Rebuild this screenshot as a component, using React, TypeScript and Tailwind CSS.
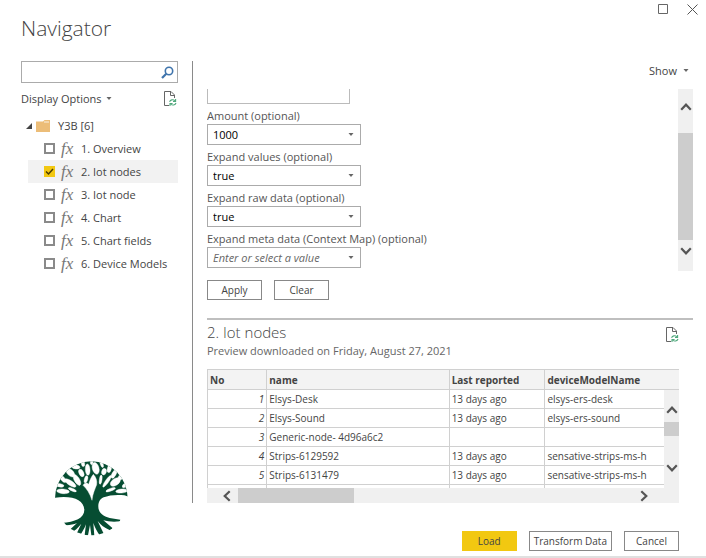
import type { ReactNode } from "react";

const treeItems = [
  "1. Overview",
  "2. Iot nodes",
  "3. Iot node",
  "4. Chart",
  "5. Chart fields",
  "6. Device Models",
];

const rows = [
  ["1", "Elsys-Desk", "13 days ago", "elsys-ers-desk"],
  ["2", "Elsys-Sound", "13 days ago", "elsys-ers-sound"],
  ["3", "Generic-node- 4d96a6c2", "", ""],
  ["4", "Strips-6129592", "13 days ago", "sensative-strips-ms-h"],
  ["5", "Strips-6131479", "13 days ago", "sensative-strips-ms-h"],
];

const params = [
  { id: "amount", label: "Amount (optional)", value: "1000" },
  { id: "values", label: "Expand values (optional)", value: "true" },
  { id: "raw", label: "Expand raw data (optional)", value: "true" },
  { id: "meta", label: "Expand meta data (Context Map) (optional)", value: "" },
];

function Caret() {
  return (
    <svg width="6" height="4" viewBox="0 0 6 4" className="shrink-0" aria-hidden="true">
      <path d="M.5 0h5L3 3z" fill="#666" />
    </svg>
  );
}

function Chevron({ turn }: { turn: string }) {
  return (
    <svg width="12" height="12" viewBox="0 0 12 12" className={`shrink-0 ${turn}`} aria-hidden="true">
      <path d="M1.2 8.7 6 3.7l4.8 5" fill="none" stroke="#555" strokeWidth="2.2" />
    </svg>
  );
}

function RefreshPage() {
  return (
    <svg width="14" height="16" viewBox="0 0 14 16" fill="none" aria-hidden="true">
      <path d="M6 14.5H1.500v-14H8L11.500 4v3M7.500.5v4h4" stroke="#666" />
      <path d="M6.600 10.800c.6-2 3.700-2.800 5.200-1M12.600 8v2.500H10M13 12c-.6 2.100-3.700 2.800-5.200 1M7 15v-2.500h2.600" stroke="#4fa87c" strokeWidth="1.100" />
    </svg>
  );
}

function TreeLogo() {
  return (
    <svg width="73" height="75" viewBox="28 35 219 225" className="block" role="img" aria-label="Tree">
      <defs>
        <clipPath id="round">
          <ellipse cx="137" cy="147" rx="109" ry="111" />
        </clipPath>
      </defs>
      <g clipPath="url(#round)" fill="#064d32">
        <path d="M24 146V30h226v112l-14-4c-20-3-46-1-62 6-13 6-16 16-16 28 0 18 14 28 34 34l32 5-1 5c-18 2-36 1-50-3l28 24-8 6c-17-8-28-16-37-28l20 42-10 6c-11-14-18-28-23-42l4 52h-8l-6-46-9 46h-9l6-48c-6 16-14 28-24 42l-8-6 18-38c-9 12-20 22-34 29l-7-5 28-26c-14 6-30 8-48 5l2-5c40-4 68-14 68-40-2-30-38-44-92-35z" />
        <g fill="#fff" stroke="#fff" strokeWidth="1.200">
          <path d="M112 108c5-8 12-9 17-3 3-11 7-22 14-30 8 8 12 20 10 31-5 13-12 27-14 47-6-20-16-35-27-45z" />
          <ellipse cx="52" cy="126" rx="19" ry="7" transform="rotate(5 52 126)" />
          <ellipse cx="80" cy="121" rx="13" ry="4" transform="rotate(24 80 121)" />
          <ellipse cx="43" cy="108" rx="12" ry="5" transform="rotate(10 43 108)" />
          <ellipse cx="74" cy="101" rx="20" ry="7" transform="rotate(34 74 101)" />
          <ellipse cx="51" cy="88" rx="14" ry="6" transform="rotate(50 51 88)" />
          <ellipse cx="94" cy="92" rx="18" ry="8" transform="rotate(60 94 92)" />
          <ellipse cx="74" cy="70" rx="16" ry="9" transform="rotate(44 74 70)" />
          <ellipse cx="91" cy="53" rx="12" ry="6" transform="rotate(8 91 53)" />
          <ellipse cx="107" cy="71" rx="12" ry="7" transform="rotate(65 107 71)" />
          <ellipse cx="121" cy="90" rx="11" ry="5" transform="rotate(105 121 90)" />
          <ellipse cx="126" cy="61" rx="17" ry="7" transform="rotate(86 126 61)" />
          <ellipse cx="112" cy="43" rx="9" ry="5" transform="rotate(80 112 43)" />
          <ellipse cx="138" cy="39" rx="7" ry="4" transform="rotate(95 138 39)" />
          <ellipse cx="150" cy="57" rx="18" ry="10" transform="rotate(75 150 57)" />
          <ellipse cx="168" cy="44" rx="11" ry="4" transform="rotate(70 168 44)" />
          <ellipse cx="175" cy="67" rx="10" ry="7" transform="rotate(105 175 67)" />
          <ellipse cx="165" cy="91" rx="14" ry="4" transform="rotate(98 165 91)" />
          <ellipse cx="191" cy="58" rx="12" ry="6" transform="rotate(104 191 58)" />
          <ellipse cx="184" cy="96" rx="21" ry="5" transform="rotate(125 184 96)" />
          <ellipse cx="205" cy="74" rx="14" ry="6" transform="rotate(118 205 74)" />
          <ellipse cx="209" cy="98" rx="17" ry="10" transform="rotate(145 209 98)" />
          <ellipse cx="228" cy="80" rx="14" ry="7" transform="rotate(130 228 80)" />
          <ellipse cx="195" cy="121" rx="15" ry="4" transform="rotate(160 195 121)" />
          <ellipse cx="228" cy="125" rx="18" ry="6" transform="rotate(-5 228 125)" />
          <ellipse cx="241" cy="106" rx="13" ry="6" transform="rotate(145 241 106)" />
        </g>
      </g>
    </svg>
  );
}

function ActionButton({ children, primary = false }: { children: ReactNode; primary?: boolean }) {
  return (
    <button
      type="button"
      className={`flex h-5 min-w-[55px] items-center justify-center border px-1 text-[10px] leading-4 whitespace-nowrap ${
        primary ? "border-[#f2c811] bg-[#f2c811]" : "border-[#888] bg-white"
      }`}
    >
      {children}
    </button>
  );
}

function Sidebar() {
  return (
    <aside className="flex w-48 shrink-0 flex-col pr-3.5 pl-5">
      <label className="ml-px flex h-[22px] items-center border border-[#ababab] pr-[3px]">
        <input type="text" aria-label="Search" className="h-full min-w-0 flex-1 px-1 outline-none" />
        <svg width="13" height="13" viewBox="0 0 13 13" fill="none" stroke="#3f74ac" aria-hidden="true">
          <circle cx="8" cy="5" r="3.700" strokeWidth="1.600" />
          <path d="M5.300 7.700 1 12" strokeWidth="2.200" />
        </svg>
      </label>
      <div className="flex h-8 items-center justify-between pr-px">
        <button type="button" className="ml-px flex items-center gap-1">
          Display Options <Caret />
        </button>
        <button type="button" aria-label="Refresh">
          <RefreshPage />
        </button>
      </div>
      <div className="flex h-[22px] items-center pl-1.5">
        <svg width="6" height="6" viewBox="0 0 6 6" aria-hidden="true">
          <path d="M6 0v6H0z" fill="#444" />
        </svg>
        <svg width="14" height="12" viewBox="0 0 14 12" className="ml-1" aria-hidden="true">
          <path d="M0 1.500h7L8.500 0H14v12H0z" fill="#ecbd78" />
          <path d="M8 2h5" stroke="#fff" strokeWidth=".8" />
        </svg>
        <span className="ml-2">Y3B [6]</span>
      </div>
      <ul>
        {treeItems.map((item, i) => (
          <li key={item} className={`ml-2 ${i === 1 ? "bg-[#f2f2f2]" : ""}`}>
            <label className="flex h-[23px] items-center pl-4">
              <span className="grid size-[11px] shrink-0 *:col-start-1 *:row-start-1">
                <input
                  type="checkbox"
                  defaultChecked={i === 1}
                  className="peer size-[11px] appearance-none border-2 border-[#8a8a8a] bg-white checked:border-[#f2c811] checked:bg-[#f2c811]"
                />
                <svg viewBox="0 0 11 11" className="pointer-events-none hidden size-[11px] peer-checked:block" aria-hidden="true">
                  <path d="m2 5.500 2.500 2.500L9 3" fill="none" stroke="#4a3c00" strokeWidth="1.500" />
                </svg>
              </span>
              <i className="ml-1.5 w-5 font-['Liberation_Serif',serif] text-[17px] leading-5 text-[#777]">fx</i>
              <span className="whitespace-nowrap">{item}</span>
            </label>
          </li>
        ))}
      </ul>
      <div className="mt-auto mb-5 pl-[35px]">
        <TreeLogo />
      </div>
    </aside>
  );
}

function Parameters() {
  return (
    <form>
      <div className="flex h-[182px]">
        <div className="min-w-0 flex-1 overflow-hidden">
          <input
            type="text"
            aria-label="Parameter"
            className="block h-[15px] w-[143px] border border-t-0 border-[#bbb] outline-none"
          />
          {params.map((p) => (
            <div key={p.id}>
              <label htmlFor={p.id} className="block h-5 pt-1 leading-4 text-[#555]">
                {p.label}
              </label>
              <div className="grid w-[154px] items-center *:col-start-1 *:row-start-1">
                <select
                  id={p.id}
                  defaultValue={p.value}
                  className={`h-[21px] w-full appearance-none border border-[#ababab] bg-white px-[5px] outline-none ${
                    p.value ? "text-black" : "text-[#666] italic"
                  }`}
                >
                  <option value={p.value}>{p.value || "Enter or select a value"}</option>
                </select>
                <span className="pointer-events-none mr-[7px] justify-self-end">
                  <Caret />
                </span>
              </div>
            </div>
          ))}
        </div>
        <div className="flex w-[15px] flex-col items-center bg-[#f0f0f0] pt-3 pb-3.5">
          <Chevron turn="rotate-0" />
          <div className="my-[5px] mt-5 w-full flex-1 bg-[#cdcdcd]" />
          <Chevron turn="rotate-180" />
        </div>
      </div>
      <div className="flex gap-3 pt-[9px]">
        <ActionButton>Apply</ActionButton>
        <ActionButton>Clear</ActionButton>
      </div>
    </form>
  );
}

function PreviewTable() {
  const line = "border-r border-b border-[#d0d0d0]";
  return (
    <div className="mt-2.5 mr-3.5 text-[10px] leading-4">
      <div className="flex h-[119px] border-t border-l border-[#d0d0d0]">
        <div className="min-w-0 flex-1 overflow-hidden">
          <table className="w-full table-fixed border-separate border-spacing-0 whitespace-nowrap text-[#444]">
            <thead>
              <tr className="h-5 bg-[#f3f3f3] text-left *:p-0 *:font-bold">
                <th className={`w-[13%] ${line}`}><span className="pl-0.5">No</span></th>
                <th className={`w-[40%] ${line}`}><span className="pl-0.5">name</span></th>
                <th className={`w-[21%] ${line}`}><span className="pl-0.5">Last reported</span></th>
                <th className="border-b border-[#d0d0d0]"><span className="pl-0.5">deviceModelName</span></th>
              </tr>
            </thead>
            <tbody>
              {rows.map((r) => (
                <tr key={r[0]} className="h-[19px]">
                  <td className={`p-0 pr-0.5 text-right italic ${line}`}>{r[0]}</td>
                  <td className={`p-0 pl-0.5 ${line}`}>{r[1]}</td>
                  <td className={`p-0 pl-0.5 ${line}`}>{r[2]}</td>
                  <td className="border-b border-[#d0d0d0] p-0 pl-0.5">{r[3]}</td>
                </tr>
              ))}
              <tr className="h-[19px]">
                <td className={line} />
                <td className={line} />
                <td className={line} />
                <td />
              </tr>
            </tbody>
          </table>
        </div>
        <div className="flex w-[15px] flex-col">
          <div className="h-5 border-b border-[#d0d0d0] bg-[#f3f3f3]" />
          <div className="flex flex-1 flex-col items-center bg-[#f0f0f0] pt-3.5 pb-3.5">
            <Chevron turn="rotate-0" />
            <div className="mt-1.5 h-3.5 w-full bg-[#cdcdcd]" />
            <div className="mt-auto flex">
              <Chevron turn="rotate-180" />
            </div>
          </div>
        </div>
      </div>
      <div className="flex h-[15px] items-center bg-[#f0f0f0] pr-[29px] pl-3.5">
        <Chevron turn="-rotate-90" />
        <div className="mr-auto ml-[5px] h-full w-[27%] bg-[#cdcdcd]" />
        <Chevron turn="rotate-90" />
      </div>
    </div>
  );
}

export default function App() {
  return (
    <div className="flex min-h-screen flex-col border-b-2 border-[#e0e0e0] bg-white font-['Open_Sans',sans-serif] text-[11px] leading-4 text-[#444]">
      <header className="flex h-[61px] items-start justify-between pr-2 pl-[21px]">
        <h1 className="pt-3.5 text-[21px] leading-7 font-light">Navigator</h1>
        <div className="flex gap-[18px] pt-1">
          <button type="button" aria-label="Maximize">
            <svg width="11" height="11" viewBox="0 0 11 11" fill="none" stroke="#666" aria-hidden="true">
              <path d="M.5.5h9v9h-9z" />
            </svg>
          </button>
          <button type="button" aria-label="Close">
            <svg width="11" height="11" viewBox="0 0 11 11" fill="none" stroke="#555" aria-hidden="true">
              <path d="m.5.5 10 10m0-10-10 10" />
            </svg>
          </button>
        </div>
      </header>
      <div className="flex flex-1">
        <Sidebar />
        <div className="flex min-w-0 flex-1 flex-col">
          <main className="flex-1 border-l border-[#8a8a8a] pr-[13px] pl-3.5">
            <div className="flex h-7 items-center justify-end pr-1 pb-2">
              <button type="button" className="flex items-center gap-1.5">
                Show <Caret />
              </button>
            </div>
            <Parameters />
            <section className="mt-[18px] border-t-2 border-[#bfbfbf]">
              <div className="flex items-start justify-between pr-3.5">
                <div>
                  <h2 className="pt-0.5 text-[15px] leading-5 font-light">2. Iot nodes</h2>
                  <p className="pt-px text-[#666]">Preview downloaded on Friday, August 27, 2021</p>
                </div>
                <button type="button" aria-label="Refresh preview" className="pt-[7px]">
                  <RefreshPage />
                </button>
              </div>
              <PreviewTable />
            </section>
          </main>
          <footer className="flex justify-end gap-3 pt-7 pr-[27px] pb-[5px]">
            <ActionButton primary>Load</ActionButton>
            <ActionButton>Transform Data</ActionButton>
            <ActionButton>Cancel</ActionButton>
          </footer>
        </div>
      </div>
    </div>
  );
}
